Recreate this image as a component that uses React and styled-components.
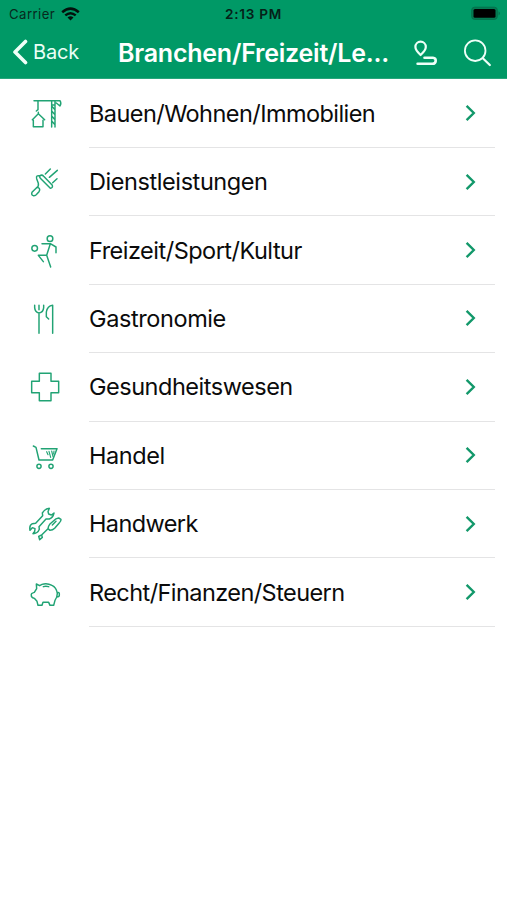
import React from "react";
import styled, { createGlobalStyle } from "styled-components";

const GREEN = "#009966";

const GlobalStyle = createGlobalStyle`
  body { margin: 0; background: #fff; font-family: Inter, "Liberation Sans", sans-serif; }
  * { box-sizing: border-box; }
`;

const Screen = styled.main`
  width: 507px;
  height: 900px;
  overflow: hidden;
  background: #fff;
`;

const Header = styled.header`
  height: 79px;
  background: ${GREEN};
  border-bottom: 1px solid #27a67b;
`;

const StatusBar = styled.div`
  height: 27px;
  display: grid;
  grid-template-columns: 1fr auto 1fr;
  align-items: center;
  padding: 0 6px 0 9px;
  color: #07291d;
  font-size: 13.2px;
`;

const Carrier = styled.div`
  display: flex;
  align-items: center;
  gap: 6px;
  letter-spacing: 0.42px;
`;

const Clock = styled.div`
  margin-right: 3px;
  font-size: 13.6px;
  font-weight: 600;
  letter-spacing: 0.75px;
  color: #052118;
`;

const BatterySlot = styled.div`
  display: flex;
  justify-content: flex-end;
`;

const NavBar = styled.nav`
  height: 51px;
  display: flex;
  align-items: center;
  padding-left: 12px;
  color: #fff;
`;

const BackButton = styled.a`
  display: flex;
  align-items: center;
  gap: 5px;
  width: 106px;
  padding-bottom: 1px;
  font-size: 20px;
  letter-spacing: -0.2px;
  color: #e9fff6;
`;

const Title = styled.h1`
  margin: 0;
  width: 295px;
  font-size: 25px;
  font-weight: 600;
  letter-spacing: -0.23px;
  white-space: nowrap;
`;

const NavActions = styled.div`
  display: flex;
  align-items: center;
  gap: 24px;
`;

const NavIcon = styled.svg`
  flex: none;
  display: block;
  fill: none;
  stroke: #effff8;
  stroke-linecap: round;
  stroke-linejoin: round;
`;

const List = styled.ul`
  margin: 0;
  padding: 0.6px 12px 0 20px;
  list-style: none;
`;

const Row = styled.li`
  height: 68.4px;
  display: flex;
  align-items: center;
`;

const Pictogram = styled.svg`
  flex: none;
  width: 60px;
  height: 60px;
  margin-right: 9px;
  fill: none;
  stroke: #21a374;
  stroke-width: 4.4;
  stroke-linejoin: round;
  stroke-linecap: round;
`;

const RowBody = styled.div`
  flex: 1;
  height: 100%;
  display: flex;
  align-items: center;
  justify-content: space-between;
  padding-right: 18px;
  border-bottom: 1px solid #e4e4e5;
`;

const Label = styled.span`
  font-size: 23.5px;
  letter-spacing: ${(p) => p.$tracking}px;
  color: #0b0b0b;
  white-space: nowrap;
`;

const Chevron = styled.svg`
  width: 12px;
  height: 18px;
  fill: none;
  stroke: #12986a;
  stroke-width: 2.4;
`;

const CraneIcon = () => (
  <g transform="translate(0 5)">
    <path d="M42 45H120Q125 52 120 61L109 52M54 46V72L49 76M55 80V84L37 102M55 84L74 102M40 104V123H69V104M95 45V124M105 45V124M95 58H105M95 61L105 72M95 76L105 87M95 91L105 102M95 106L105 117" />
  </g>
);

const BrushIcon = () => (
  <path d="M60 71Q66 67 71 73L97 100Q99 108 91 109L61 79Q57 75 60 71ZM60 72Q47 68 50 80L55 94Q57 104 49 108M49 108L36 121Q33 129 40 131Q46 132 50 127L57 119Q62 111 55 107Q52 105 49 108ZM76 66L91 51M88 76L112 55M98 92L111 80" />
);

const PlayerIcon = () => (
  <g>
    <circle cx="90" cy="53" r="8.5" />
    <circle cx="44" cy="82" r="8.5" />
    <path d="M66 68H91L108 78V95M91 68L80 103H55L70 122M80 103L92 138" />
  </g>
);

const CutleryIcon = () => (
  <path d="M44 49V56Q45 70 57 72Q70 70 71 56V49M57 49V62M57 72V133M98 133V49Q82 51 79 69V83L86 90" />
);

const CrossIcon = () => (
  <path d="M58 49H93V73H116V107H93V131H58V107H35V73H58Z" />
);

const CartIcon = () => (
  <g>
    <path d="M40 60L48 64L57 102H98L111 68H64" />
    <path d="M80 77L84 86M87 76L92 94M95 75L99 92M102 75L101 84" strokeWidth="3.4" />
    <circle cx="57" cy="121" r="6.3" />
    <circle cx="93" cy="121" r="6.3" />
  </g>
);

const ToolsIcon = () => (
  <g>
    <path d="M88 43Q75 44 67 57L68 65L47 88L37 89Q27 94 30 109L37 101L45 104L44 112L39 119Q53 119 58 106L57 98L78 75L88 75Q99 71 102 57L94 63L86 60L84 53Z" />
    <path d="M116 72Q107 73 101 80L89 91Q85 96 84 104L90 109Q98 109 104 103L117 88Q124 81 123 76ZM108 82L97 93M84 104L64 124M65 123L67 130L59 137L56 127L65 123" />
  </g>
);

const PiggyIcon = () => (
  <path d="M49 63L50 77L43 88Q32 91 34 97Q33 103 43 106L51 115L54 127H66L69 118H86L90 127H101L105 112Q112 103 112 91Q109 73 96 67Q81 59 66 64L59 68ZM70 71Q77 68 86 71M112 89Q119 86 118 95Q119 102 110 102" />
);

const ROWS = [
  { label: "Bauen/Wohnen/Immobilien", tracking: -0.56, Icon: CraneIcon },
  { label: "Dienstleistungen", tracking: -0.42, Icon: BrushIcon },
  { label: "Freizeit/Sport/Kultur", tracking: -0.51, Icon: PlayerIcon },
  { label: "Gastronomie", tracking: -0.4, Icon: CutleryIcon },
  { label: "Gesundheitswesen", tracking: -0.48, Icon: CrossIcon },
  { label: "Handel", tracking: -0.45, Icon: CartIcon },
  { label: "Handwerk", tracking: -0.6, Icon: ToolsIcon },
  { label: "Recht/Finanzen/Steuern", tracking: -0.57, Icon: PiggyIcon },
];

const WifiIcon = () => (
  <svg width="19" height="14" viewBox="0 0 19 14" fill="none" stroke="#02120c" strokeWidth="2.5">
    <path d="M1.2 5.2Q9.5 -2 17.8 5.2M4.3 8.4Q9.5 4 14.7 8.4" />
    <path d="M6.5 10.5Q9.5 8 12.5 10.5L9.5 13.5Z" fill="#02120c" stroke="none" />
  </svg>
);

const BatteryIcon = () => (
  <svg width="30" height="15" viewBox="0 0 30 15">
    <rect x="0.7" y="1.2" width="25.6" height="12.2" rx="3" fill="#047c53" stroke="#05704c" />
    <rect x="2.5" y="3" width="22" height="8.8" rx="1.5" fill="#000" />
    <path d="M27.6 5.2Q30 7.3 27.6 9.4Z" fill="#056a49" />
  </svg>
);

export default function App() {
  return (
    <Screen>
      <GlobalStyle />
      <Header>
        <StatusBar>
          <Carrier>
            Carrier
            <WifiIcon />
          </Carrier>
          <Clock>2:13 PM</Clock>
          <BatterySlot>
            <BatteryIcon />
          </BatterySlot>
        </StatusBar>
        <NavBar>
          <BackButton>
            <NavIcon width="16" height="26" viewBox="0 0 16 26" strokeWidth="3.6">
              <path d="M13.5 2.5L3 13L13.5 23.5" />
            </NavIcon>
            Back
          </BackButton>
          <Title>Branchen/Freizeit/Le...</Title>
          <NavActions>
            <NavIcon width="26" height="28" viewBox="0 0 26 28" strokeWidth="2.2">
              <path d="M7.6 16Q2.4 11 2.4 7.9A5.2 5.2 0 0 1 12.8 7.9Q12.8 11 7.6 16Z" />
              <path d="M11.5 18.8H20Q22.8 19 22.7 21.8Q22.5 24.7 19.5 24.8H4.6" strokeWidth="2.6" />
            </NavIcon>
            <NavIcon width="28" height="28" viewBox="0 0 28 28" strokeWidth="1.8">
              <circle cx="12.2" cy="11.7" r="10.3" />
              <path d="M19.8 19.3L26.8 26" strokeWidth="2.2" />
            </NavIcon>
          </NavActions>
        </NavBar>
      </Header>
      <List>
        {ROWS.map(({ label, tracking, Icon }) => (
          <Row key={label}>
            <Pictogram viewBox="0 0 180 180">
              <Icon />
            </Pictogram>
            <RowBody>
              <Label $tracking={tracking}>{label}</Label>
              <Chevron viewBox="0 0 12 18">
                <path d="M1.6 1.8L8.8 9L1.6 16.2" />
              </Chevron>
            </RowBody>
          </Row>
        ))}
      </List>
    </Screen>
  );
}
